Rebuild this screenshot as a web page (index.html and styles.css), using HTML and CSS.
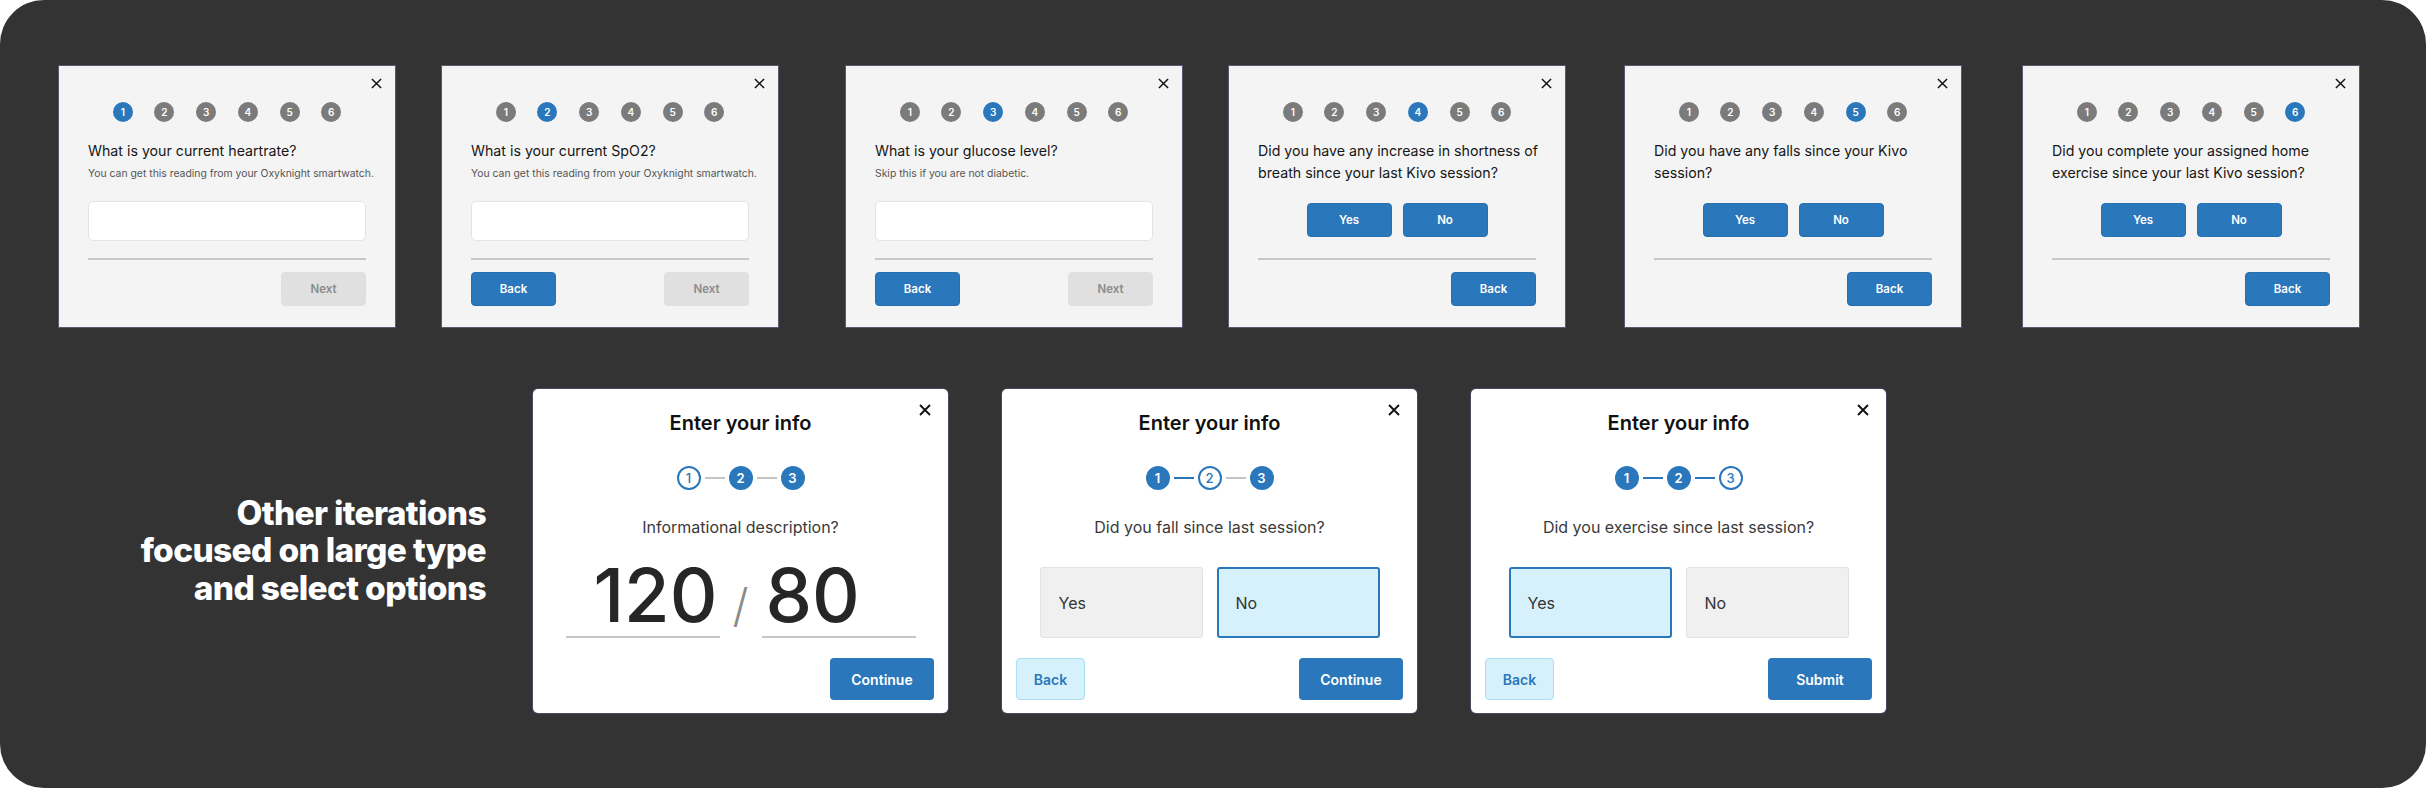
FILE: index.html
```html
<!DOCTYPE html>
<html lang="en">
<head>
    <meta charset="UTF-8">
    <meta name="viewport" content="width=device-width, initial-scale=1.0">
    <title>Check-in flow iterations</title>
    <link rel="stylesheet" href="styles.css">
</head>
<body>
    <div class="board">

        <!-- First pass: six step questionnaire -->
        <div class="top-row">
            <div class="q-card">
                <button class="close" aria-label="Close"><svg viewBox="0 0 12 12"><path d="M1 1L11 11M11 1L1 11"/></svg></button>
                <div class="dots">
                    <span class="dot on">1</span><span class="dot">2</span><span class="dot">3</span><span class="dot">4</span><span class="dot">5</span><span class="dot">6</span>
                </div>
                <h2 class="q-title">What is your current heartrate?</h2>
                <p class="q-hint">You can get this reading from your Oxyknight smartwatch.</p>
                <div class="q-input"></div>
                <div class="q-rule"></div>
                <div class="q-foot">
                    <button class="btn-sm btn-off push">Next</button>
                </div>
            </div>

            <div class="q-card">
                <button class="close" aria-label="Close"><svg viewBox="0 0 12 12"><path d="M1 1L11 11M11 1L1 11"/></svg></button>
                <div class="dots">
                    <span class="dot">1</span><span class="dot on">2</span><span class="dot">3</span><span class="dot">4</span><span class="dot">5</span><span class="dot">6</span>
                </div>
                <h2 class="q-title">What is your current SpO2?</h2>
                <p class="q-hint">You can get this reading from your Oxyknight smartwatch.</p>
                <div class="q-input"></div>
                <div class="q-rule"></div>
                <div class="q-foot">
                    <button class="btn-sm">Back</button>
                    <button class="btn-sm btn-off">Next</button>
                </div>
            </div>

            <div class="q-card">
                <button class="close" aria-label="Close"><svg viewBox="0 0 12 12"><path d="M1 1L11 11M11 1L1 11"/></svg></button>
                <div class="dots">
                    <span class="dot">1</span><span class="dot">2</span><span class="dot on">3</span><span class="dot">4</span><span class="dot">5</span><span class="dot">6</span>
                </div>
                <h2 class="q-title">What is your glucose level?</h2>
                <p class="q-hint">Skip this if you are not diabetic.</p>
                <div class="q-input"></div>
                <div class="q-rule"></div>
                <div class="q-foot">
                    <button class="btn-sm">Back</button>
                    <button class="btn-sm btn-off">Next</button>
                </div>
            </div>

            <div class="q-card">
                <button class="close" aria-label="Close"><svg viewBox="0 0 12 12"><path d="M1 1L11 11M11 1L1 11"/></svg></button>
                <div class="dots">
                    <span class="dot">1</span><span class="dot">2</span><span class="dot">3</span><span class="dot on">4</span><span class="dot">5</span><span class="dot">6</span>
                </div>
                <h2 class="q-title">Did you have any increase in shortness of<br>breath since your last Kivo session?</h2>
                <div class="yes-no">
                    <button class="btn-sm">Yes</button>
                    <button class="btn-sm">No</button>
                </div>
                <div class="q-rule"></div>
                <div class="q-foot">
                    <button class="btn-sm push">Back</button>
                </div>
            </div>

            <div class="q-card">
                <button class="close" aria-label="Close"><svg viewBox="0 0 12 12"><path d="M1 1L11 11M11 1L1 11"/></svg></button>
                <div class="dots">
                    <span class="dot">1</span><span class="dot">2</span><span class="dot">3</span><span class="dot">4</span><span class="dot on">5</span><span class="dot">6</span>
                </div>
                <h2 class="q-title">Did you have any falls since your Kivo<br>session?</h2>
                <div class="yes-no">
                    <button class="btn-sm">Yes</button>
                    <button class="btn-sm">No</button>
                </div>
                <div class="q-rule"></div>
                <div class="q-foot">
                    <button class="btn-sm push">Back</button>
                </div>
            </div>

            <div class="q-card">
                <button class="close" aria-label="Close"><svg viewBox="0 0 12 12"><path d="M1 1L11 11M11 1L1 11"/></svg></button>
                <div class="dots">
                    <span class="dot">1</span><span class="dot">2</span><span class="dot">3</span><span class="dot">4</span><span class="dot">5</span><span class="dot on">6</span>
                </div>
                <h2 class="q-title">Did you complete your assigned home<br>exercise since your last Kivo session?</h2>
                <div class="yes-no">
                    <button class="btn-sm">Yes</button>
                    <button class="btn-sm">No</button>
                </div>
                <div class="q-rule"></div>
                <div class="q-foot">
                    <button class="btn-sm push">Back</button>
                </div>
            </div>
        </div>

        <!-- Second pass: large type + select options -->
        <div class="bottom-row">
            <p class="note">Other iterations<br>focused on large type<br>and select options</p>

            <div class="info-card">
                <button class="close big" aria-label="Close"><svg viewBox="0 0 12 12"><path d="M1 1L11 11M11 1L1 11"/></svg></button>
                <h2 class="info-title">Enter your info</h2>
                <div class="steps">
                    <span class="step cur">1</span><span class="link"></span><span class="step">2</span><span class="link"></span><span class="step">3</span>
                </div>
                <p class="info-q">Informational description?</p>
                <div class="bp">
                    <div class="bp-field left">120</div>
                    <div class="bp-slash">/</div>
                    <div class="bp-field">80</div>
                </div>
                <div class="info-foot">
                    <button class="btn-lg push">Continue</button>
                </div>
            </div>

            <div class="info-card">
                <button class="close big" aria-label="Close"><svg viewBox="0 0 12 12"><path d="M1 1L11 11M11 1L1 11"/></svg></button>
                <h2 class="info-title">Enter your info</h2>
                <div class="steps">
                    <span class="step">1</span><span class="link done"></span><span class="step cur">2</span><span class="link"></span><span class="step">3</span>
                </div>
                <p class="info-q">Did you fall since last session?</p>
                <div class="options">
                    <div class="option">Yes</div>
                    <div class="option picked">No</div>
                </div>
                <div class="info-foot">
                    <button class="btn-lg btn-ghost">Back</button>
                    <button class="btn-lg">Continue</button>
                </div>
            </div>

            <div class="info-card">
                <button class="close big" aria-label="Close"><svg viewBox="0 0 12 12"><path d="M1 1L11 11M11 1L1 11"/></svg></button>
                <h2 class="info-title">Enter your info</h2>
                <div class="steps">
                    <span class="step">1</span><span class="link done"></span><span class="step">2</span><span class="link done"></span><span class="step cur">3</span>
                </div>
                <p class="info-q">Did you exercise since last session?</p>
                <div class="options">
                    <div class="option picked">Yes</div>
                    <div class="option">No</div>
                </div>
                <div class="info-foot">
                    <button class="btn-lg btn-ghost">Back</button>
                    <button class="btn-lg">Submit</button>
                </div>
            </div>
        </div>

    </div>
</body>
</html>
```

FILE: styles.css
```css
body {
    margin: 0;
    background-color: #fff;
    font-family: Inter, "Noto Sans", sans-serif;
}

button {
    border: 0;
    padding: 0;
    font: inherit;
    cursor: pointer;
}

.board {
    width: 2426px;
    height: 788px;
    box-sizing: border-box;
    padding-top: 66px;
    background-color: #333333;
    border-radius: 44px;
}

/* ---------- top row ---------- */

.top-row {
    display: flex;
    padding-left: 59px;
}

.top-row .q-card:nth-child(2) { margin-left: 47px; }
.top-row .q-card:nth-child(3) { margin-left: 68px; }
.top-row .q-card:nth-child(4) { margin-left: 47px; }
.top-row .q-card:nth-child(5) { margin-left: 60px; }
.top-row .q-card:nth-child(6) { margin-left: 62px; }

.q-card {
    position: relative;
    width: 336px;
    height: 261px;
    box-sizing: border-box;
    padding: 36px 29px 21px;
    display: flex;
    flex-direction: column;
    background-color: #f4f4f4;
    box-shadow: 0 0 0 1px #5a5870;
}

.close {
    position: absolute;
    top: 12px;
    right: 13px;
    width: 11px;
    height: 11px;
    background: none;
}

.close svg {
    display: block;
    width: 100%;
    height: 100%;
    fill: none;
    stroke: #111;
    stroke-width: 1.6;
}

.close.big {
    top: 15px;
    right: 17px;
    width: 12px;
    height: 12px;
}

.close.big svg {
    stroke-width: 1.9;
}

.dots {
    display: flex;
    justify-content: center;
    gap: 21.7px;
}

.dot {
    width: 20px;
    height: 20px;
    border-radius: 50%;
    background-color: #7b7b7b;
    color: #fff;
    font-size: 10px;
    font-weight: 600;
    display: flex;
    justify-content: center;
    align-items: center;
}

.dot.on {
    background-color: #2a77bb;
}

.q-title {
    margin: 18px 0 0;
    font-size: 14.2px;
    font-weight: 400;
    line-height: 21.7px;
    color: #161616;
    white-space: nowrap;
}

.q-hint {
    margin: 5px 0 0;
    font-size: 10.4px;
    line-height: 14px;
    color: #555;
    white-space: nowrap;
}

.q-input {
    margin-top: 20px;
    height: 40px;
    box-sizing: border-box;
    background-color: #fff;
    border: 1px solid #e4e4e4;
    border-radius: 5px;
}

.yes-no {
    display: flex;
    justify-content: center;
    gap: 11px;
    margin-top: 20px;
}

.q-rule {
    margin-top: auto;
    height: 2px;
    background-color: #c8c8c8;
}

.q-foot {
    display: flex;
    justify-content: space-between;
    margin-top: 12px;
}

.btn-sm {
    width: 85px;
    height: 34px;
    border-radius: 4px;
    background-color: #2a77bb;
    border: 1px solid #2570b0;
    color: #fff;
    font-size: 11.5px;
    font-weight: 600;
}

.btn-sm.btn-off {
    background-color: #e0e0e0;
    border-color: #e0e0e0;
    color: #8b8b8b;
}

.push {
    margin-left: auto;
}

/* ---------- bottom row ---------- */

.bottom-row {
    display: flex;
    align-items: center;
    margin-top: 62px;
}

.note {
    width: 486px;
    margin: 0 47px 0 0;
    text-align: right;
    color: #fff;
    font-size: 33.5px;
    font-weight: 800;
    line-height: 37.5px;
    letter-spacing: -0.02em;
}

.info-card {
    position: relative;
    width: 415px;
    height: 324px;
    box-sizing: border-box;
    padding: 0 14px 13px;
    display: flex;
    flex-direction: column;
    align-items: center;
    background-color: #fff;
    border-radius: 5px;
    box-shadow: 0 0 0 1px #4a4860;
}

.info-card + .info-card {
    margin-left: 54px;
}

.info-title {
    margin: 22px 0 0;
    font-size: 20px;
    font-weight: 600;
    line-height: 24px;
    color: #111;
}

.steps {
    display: flex;
    align-items: center;
    margin-top: 31px;
}

.step {
    width: 24px;
    height: 24px;
    box-sizing: border-box;
    border-radius: 50%;
    background-color: #2a77bb;
    color: #fff;
    font-size: 13px;
    font-weight: 600;
    display: flex;
    justify-content: center;
    align-items: center;
}

.step.cur {
    background-color: #fff;
    border: 2px solid #2a77bb;
    color: #2a77bb;
    font-weight: 500;
}

.link {
    width: 20px;
    height: 2px;
    margin: 0 4px;
    background-color: #c4c4c4;
}

.link.done {
    background-color: #2a77bb;
}

.info-q {
    margin: 27px 0 0;
    font-size: 16px;
    line-height: 20px;
    color: #3a3a3a;
}

.bp {
    display: flex;
    align-items: baseline;
    margin-top: 21px;
}

.bp-field {
    width: 154px;
    padding: 0 0 4px 4px;
    box-sizing: border-box;
    border-bottom: 2px solid #c6c6c6;
    font-size: 74px;
    font-weight: 500;
    line-height: 74px;
    color: #262626;
}

.bp-field.left {
    padding: 0 2px 4px 0;
    text-align: right;
}

.bp-slash {
    width: 42px;
    text-align: center;
    font-size: 46px;
    font-weight: 300;
    color: #8a8a8a;
}

.options {
    display: flex;
    gap: 14px;
    margin-top: 30px;
}

.option {
    width: 163px;
    height: 71px;
    box-sizing: border-box;
    padding-left: 18px;
    display: flex;
    align-items: center;
    background-color: #f0f0f0;
    border: 1px solid #e2e2e2;
    border-radius: 3px;
    font-size: 16px;
    color: #333;
}

.option.picked {
    padding-left: 17px;
    background-color: #d7f1fc;
    border: 2px solid #2a77bb;
}

.info-foot {
    display: flex;
    justify-content: space-between;
    width: 100%;
    margin-top: auto;
}

.btn-lg {
    width: 104px;
    height: 42px;
    border-radius: 4px;
    background-color: #2a77bb;
    color: #fff;
    font-size: 14px;
    font-weight: 600;
}

.btn-lg.btn-ghost {
    width: 69px;
    background-color: #d7f1fc;
    border: 1px solid #a9def6;
    color: #2a77bb;
}
```
